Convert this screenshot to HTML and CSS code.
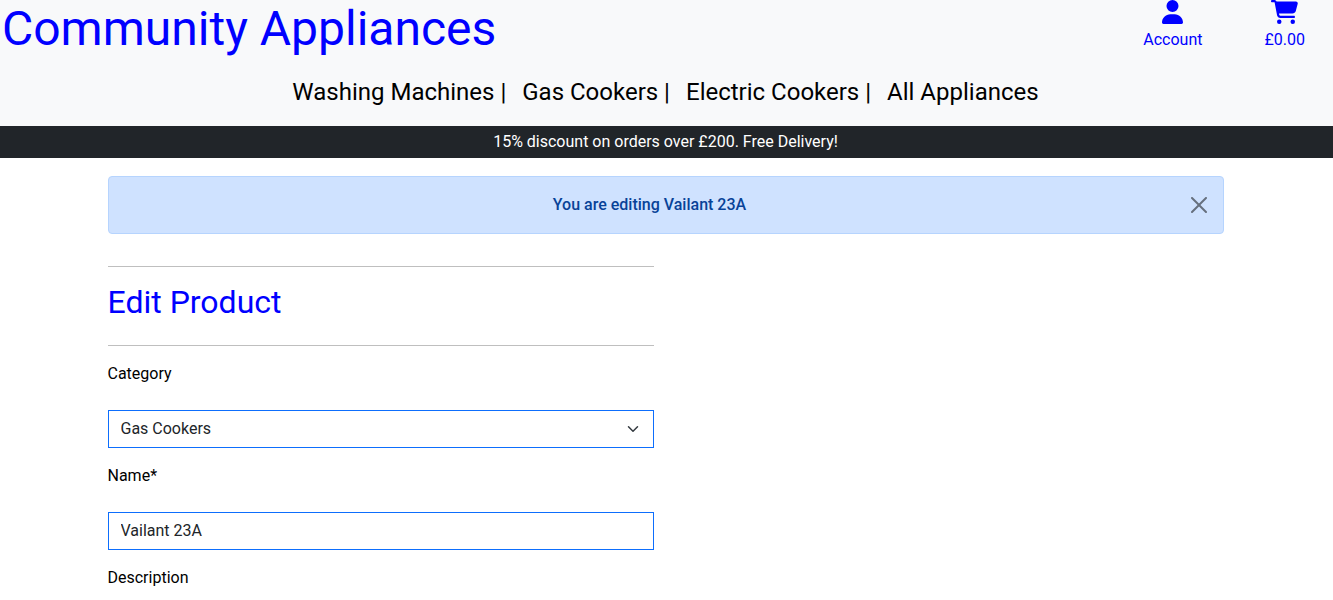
FILE: index.html
```html
<!DOCTYPE html>
<html lang="en">
<head>
<meta charset="utf-8">
<meta name="viewport" content="width=device-width, initial-scale=1">
<title>Community Appliances - Edit Product</title>
<link rel="stylesheet" href="styles.css">
</head>
<body>
<header class="site-header">
  <div class="topbar">
    <a class="brand" href="#">Community Appliances</a>
    <ul class="user-links">
      <li><a class="user-link" href="#">
        <svg class="icon icon-user" viewBox="0 0 448 512" aria-hidden="true"><path d="M224 256a128 128 0 1 0 0-256 128 128 0 1 0 0 256zm-45.700 48C79.800 304 0 383.800 0 482.300 0 498.700 13.300 512 29.700 512h388.600c16.400 0 29.700-13.300 29.700-29.700C448 383.800 368.200 304 269.700 304h-91.400z"/></svg>
        <span>Account</span></a></li>
      <li><a class="user-link" href="#">
        <svg class="icon icon-cart" viewBox="0 0 576 512" aria-hidden="true"><path d="M0 24C0 10.700 10.700 0 24 0h45.500c22 0 41.500 12.800 50.600 32h411c26.300 0 45.500 25 38.600 50.400l-41 152.300c-8.500 31.400-37 53.300-69.500 53.300H170.700l5.400 28.500c2.200 11.300 12.100 19.500 23.600 19.500H488c13.300 0 24 10.700 24 24s-10.700 24-24 24H199.700c-34.600 0-64.300-24.600-70.700-58.500L77.400 54.500c-.7-3.800-4-6.500-7.900-6.500H24C10.700 48 0 37.300 0 24zm128 440a48 48 0 1 1 96 0 48 48 0 1 1-96 0zm336-48a48 48 0 1 1 0 96 48 48 0 1 1 0-96z"/></svg>
        <span>£0.00</span></a></li>
    </ul>
  </div>
  <nav class="main-nav" aria-label="Categories">
    <a href="#">Washing Machines |</a>
    <a href="#">Gas Cookers |</a>
    <a href="#">Electric Cookers |</a>
    <a href="#">All Appliances</a>
  </nav>
</header>
<p class="promo">15% discount on orders over £200. Free Delivery!</p>
<main class="page">
  <div class="container">
    <div class="alert" role="alert">
      <strong>You are editing Vailant 23A</strong>
      <button class="close" type="button" aria-label="Close"><svg viewBox="0 0 16 16" aria-hidden="true"><path d="M.293.293a1 1 0 0 1 1.414 0L8 6.586 14.293.293a1 1 0 1 1 1.414 1.414L9.414 8l6.293 6.293a1 1 0 0 1-1.414 1.414L8 9.414l-6.293 6.293a1 1 0 0 1-1.414-1.414L6.586 8 .293 1.707a1 1 0 0 1 0-1.414z"/></svg></button>
    </div>
    <section class="editor">
      <hr>
      <h2>Edit Product</h2>
      <hr>
      <form>
        <div class="field">
          <label for="category">Category</label>
          <div class="select-wrap">
            <select id="category"><option>Gas Cookers</option><option>Washing Machines</option><option>Electric Cookers</option></select>
            <svg class="chevron" viewBox="0 0 16 16" aria-hidden="true"><path d="m2 5 6 6 6-6"/></svg>
          </div>
        </div>
        <div class="field">
          <label for="name">Name*</label>
          <input id="name" type="text" value="Vailant 23A" required>
        </div>
        <div class="field">
          <label for="description">Description</label>
        </div>
      </form>
    </section>
  </div>
</main>
</body>
</html>
```
FILE: styles.css
```css
* { box-sizing: border-box; }

body {
  margin: 0;
  font: 16px/24px Roboto, sans-serif;
  color: #000;
  background: #fff;
}

a { color: #00f; text-decoration: none; }

.site-header { background: #f8f9fa; }

.topbar {
  display: flex;
  justify-content: space-between;
  padding: 0 28px 10px 2px;
}

.brand { font-size: 48px; line-height: 58px; }

.user-links {
  display: flex;
  gap: 62px;
  margin: 0;
  padding: 0;
  list-style: none;
}

.user-link {
  display: flex;
  flex-direction: column;
  align-items: center;
  gap: 4px;
}

.icon { height: 24px; fill: currentColor; }
.icon-user { width: 21px; }
.icon-cart { width: 27px; }

.main-nav {
  display: flex;
  justify-content: center;
  gap: 16px;
  padding: 6px 2px 16px 0;
  font-size: 24px;
  line-height: 36px;
}

.main-nav a { color: #000; }

.promo {
  margin: 0;
  padding: 4px 2px 4px 0;
  color: #fff;
  background: #212529;
  text-align: center;
}

.page { padding-right: 2px; }

.container {
  max-width: 1140px;
  margin: 0 auto;
  padding: 18px 12px 0;
}

.alert {
  display: flex;
  align-items: center;
  gap: 16px;
  padding: 16px;
  color: #084298;
  background: #cfe2ff;
  border: 1px solid #b6d4fe;
  border-radius: 4px;
}

.alert strong { flex: 1; font-weight: 500; text-align: center; }

.close {
  display: flex;
  padding: 0;
  border: 0;
  background: none;
  opacity: 0.5;
}

.close svg { width: 16px; height: 16px; }

.editor { width: 49%; padding-top: 32px; }

hr { margin: 0; border: 0; border-top: 1px solid #bfbfbf; }

h2 {
  margin: 16px 0 24px;
  color: #00f;
  font-size: 32px;
  font-weight: 400;
  line-height: 38px;
}

form { padding-top: 16px; }

.field + .field { margin-top: 16px; }

label { display: block; }

input, select {
  display: block;
  width: 100%;
  padding: 6px 12px;
  border: 1px solid #0d6efd;
  border-radius: 0;
  color: #212529;
  background: #fff;
  font: inherit;
}

input, .select-wrap { margin-top: 24px; }

select { appearance: none; }

.select-wrap { display: grid; align-items: center; }
.select-wrap > * { grid-area: 1 / 1; }

.chevron {
  width: 16px;
  height: 12px;
  margin-right: 13px;
  justify-self: end;
  pointer-events: none;
  fill: none;
  stroke: #343a40;
  stroke-width: 2;
  stroke-linecap: round;
  stroke-linejoin: round;
}
```
